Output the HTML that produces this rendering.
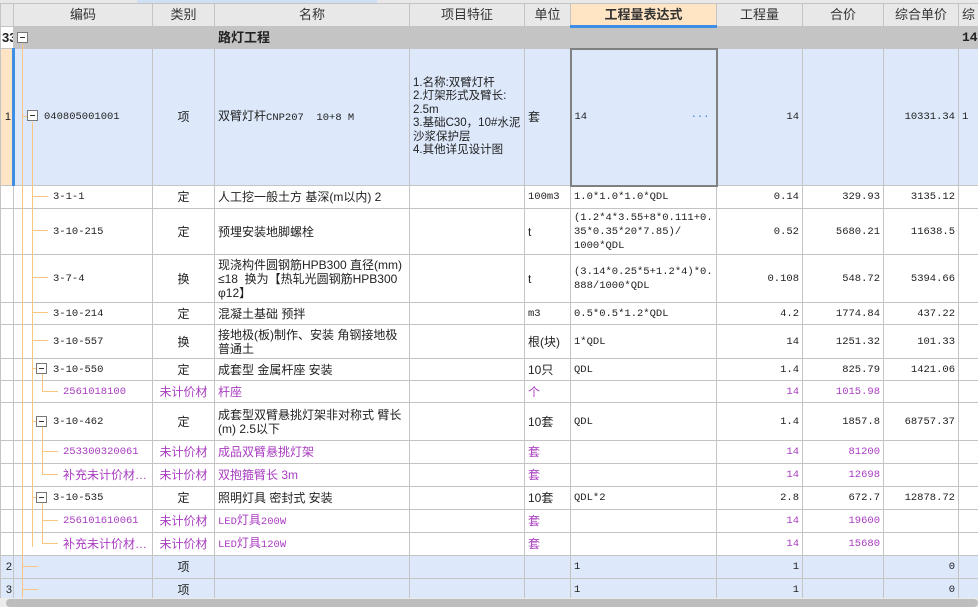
<!DOCTYPE html>
<html><head><meta charset="utf-8"><style>
*{margin:0;padding:0;box-sizing:border-box}
body{width:978px;height:607px;overflow:hidden;background:#fff;font-family:"Liberation Sans","Noto Sans CJK SC",sans-serif;font-size:12px;color:#222;position:relative}
table{position:absolute;left:0;top:3px;border-collapse:collapse;table-layout:fixed;width:978px}
td{border:1px solid #c4c4c4;padding:0 3px;overflow:hidden;white-space:nowrap;line-height:14px;vertical-align:middle}
td.w{white-space:normal;word-break:break-all}
.m{font-family:"Liberation Mono","Noto Sans CJK SC",monospace;font-size:10.5px}
tr.h td{background:#e8e8e8;text-align:center;font-size:13px;height:23px;color:#333}
tr.h td.sel{background:#ffe5c4;font-weight:bold;border-bottom:3px solid #3d8fe6}
tr.g td{background:#c4c4c4;font-weight:bold;height:22px;font-size:13px}
tr.b td{background:#dde9fb}
td.c{text-align:center}
td.r{text-align:right}
td.n{background:#fff;text-align:right;padding:0 1px;font-size:11px}
.p{color:#a93cc0}
.t{position:absolute;background:#f8c680}
.box{position:absolute;width:11px;height:11px;border:1px solid #777;background:#fff}
.box:after{content:"";position:absolute;left:2px;top:4px;width:5px;height:1px;background:#333}
</style></head><body>
<div style="position:absolute;left:0;top:0;width:978px;height:3px;background:#e8e8e8"></div>
<div style="position:absolute;left:137px;top:0;width:240px;height:3px;background:#cfe0f5"></div>
<table>
<colgroup><col style="width:13px"><col style="width:139px"><col style="width:62px"><col style="width:195px"><col style="width:115px"><col style="width:46px"><col style="width:146px"><col style="width:86px"><col style="width:81px"><col style="width:75px"><col style="width:20px"></colgroup>
<tr class="h"><td></td><td>编码</td><td>类别</td><td>名称</td><td>项目特征</td><td>单位</td><td class="sel">工程量表达式</td><td>工程量</td><td>合价</td><td>综合单价</td><td>综</td></tr>
<tr class="g"><td class="n" style="background:#fff;font-weight:bold">33</td><td></td><td></td><td>路灯工程</td><td></td><td></td><td></td><td></td><td></td><td></td><td class="m" style="font-weight:bold">14</td></tr>
<tr class="b" style="height:137px"><td class="n" style="background:#ffe5c4;border-right:3px solid #3d8fe6">1</td><td class="m" style="padding-left:29px">040805001001</td><td class="c">项</td><td>双臂灯杆<span class="m">CNP207&nbsp;&nbsp;10+8 M</span></td><td class="w" style="line-height:13.5px;font-size:11.5px">1.名称:双臂灯杆<br>2.灯架形式及臂长:<br>2.5m<br>3.基础C30，10#水泥沙浆保护层<br>4.其他详见设计图</td><td>套</td><td class="m" style="border:2px solid #808080;position:relative">14<span style="position:absolute;right:6px;color:#4a7fc0">···</span></td><td class="r m">14</td><td></td><td class="r m">10331.34</td><td class="m">1</td></tr>
<tr style="height:23px"><td class="n"></td><td class="m" style="padding-left:39px">3-1-1</td><td class="c">定</td><td>人工挖一般土方 基深(m以内) 2</td><td></td><td class="m">100m3</td><td class="m">1.0*1.0*1.0*QDL</td><td class="r m">0.14</td><td class="r m">329.93</td><td class="r m">3135.12</td><td></td></tr>
<tr style="height:46px"><td class="n"></td><td class="m" style="padding-left:39px">3-10-215</td><td class="c">定</td><td>预埋安装地脚螺栓</td><td></td><td>t</td><td class="w m">(1.2*4*3.55+8*0.111+0.35*0.35*20*7.85)/<br>1000*QDL</td><td class="r m">0.52</td><td class="r m">5680.21</td><td class="r m">11638.5</td><td></td></tr>
<tr style="height:48px"><td class="n"></td><td class="m" style="padding-left:39px">3-7-4</td><td class="c">换</td><td class="w">现浇构件圆钢筋HPB300 直径(mm) ≤18&nbsp; 换为【热轧光圆钢筋HPB300 φ12】</td><td></td><td>t</td><td class="w m">(3.14*0.25*5+1.2*4)*0.888/1000*QDL</td><td class="r m">0.108</td><td class="r m">548.72</td><td class="r m">5394.66</td><td></td></tr>
<tr style="height:22px"><td class="n"></td><td class="m" style="padding-left:39px">3-10-214</td><td class="c">定</td><td>混凝土基础 预拌</td><td></td><td class="m">m3</td><td class="m">0.5*0.5*1.2*QDL</td><td class="r m">4.2</td><td class="r m">1774.84</td><td class="r m">437.22</td><td></td></tr>
<tr style="height:34px"><td class="n"></td><td class="m" style="padding-left:39px">3-10-557</td><td class="c">换</td><td class="w">接地极(板)制作、安装 角钢接地极普通土</td><td></td><td>根(块)</td><td class="m">1*QDL</td><td class="r m">14</td><td class="r m">1251.32</td><td class="r m">101.33</td><td></td></tr>
<tr style="height:22px"><td class="n"></td><td class="m" style="padding-left:39px">3-10-550</td><td class="c">定</td><td>成套型 金属杆座 安装</td><td></td><td>10只</td><td class="m">QDL</td><td class="r m">1.4</td><td class="r m">825.79</td><td class="r m">1421.06</td><td></td></tr>
<tr style="height:22px" class="p"><td class="n"></td><td class="m" style="padding-left:49px">2561018100</td><td class="c">未计价材</td><td>杆座</td><td></td><td>个</td><td></td><td class="r m">14</td><td class="r m">1015.98</td><td></td><td></td></tr>
<tr style="height:38px"><td class="n"></td><td class="m" style="padding-left:39px">3-10-462</td><td class="c">定</td><td class="w">成套型双臂悬挑灯架非对称式 臂长(m) 2.5以下</td><td></td><td>10套</td><td class="m">QDL</td><td class="r m">1.4</td><td class="r m">1857.8</td><td class="r m">68757.37</td><td></td></tr>
<tr style="height:23px" class="p"><td class="n"></td><td class="m" style="padding-left:49px">253300320061</td><td class="c">未计价材</td><td>成品双臂悬挑灯架</td><td></td><td>套</td><td></td><td class="r m">14</td><td class="r m">81200</td><td></td><td></td></tr>
<tr style="height:23px" class="p"><td class="n"></td><td style="padding-left:49px">补充未计价材…</td><td class="c">未计价材</td><td>双抱箍臂长 3m</td><td></td><td>套</td><td></td><td class="r m">14</td><td class="r m">12698</td><td></td><td></td></tr>
<tr style="height:23px"><td class="n"></td><td class="m" style="padding-left:39px">3-10-535</td><td class="c">定</td><td>照明灯具 密封式 安装</td><td></td><td>10套</td><td class="m">QDL*2</td><td class="r m">2.8</td><td class="r m">672.7</td><td class="r m">12878.72</td><td></td></tr>
<tr style="height:23px" class="p"><td class="n"></td><td class="m" style="padding-left:49px">256101610061</td><td class="c">未计价材</td><td><span class="m">LED</span>灯具<span class="m">200W</span></td><td></td><td>套</td><td></td><td class="r m">14</td><td class="r m">19600</td><td></td><td></td></tr>
<tr style="height:23px" class="p"><td class="n"></td><td style="padding-left:49px">补充未计价材…</td><td class="c">未计价材</td><td><span class="m">LED</span>灯具<span class="m">120W</span></td><td></td><td>套</td><td></td><td class="r m">14</td><td class="r m">15680</td><td></td><td></td></tr>
<tr class="b" style="height:23px"><td class="n">2</td><td></td><td class="c">项</td><td></td><td></td><td></td><td class="m">1</td><td class="r m">1</td><td></td><td class="r m">0</td><td></td></tr>
<tr class="b" style="height:23px"><td class="n">3</td><td></td><td class="c">项</td><td></td><td></td><td></td><td class="m">1</td><td class="r m">1</td><td></td><td class="r m">0</td><td></td></tr>
</table>
<div class="t" style="left:22px;top:44px;width:1px;height:554px"></div>
<div class="t" style="left:32px;top:122px;width:1px;height:425px"></div>
<div class="t" style="left:22px;top:116px;width:5px;height:1px"></div>
<div class="t" style="left:32px;top:196px;width:16px;height:1px"></div>
<div class="t" style="left:32px;top:230px;width:16px;height:1px"></div>
<div class="t" style="left:32px;top:277px;width:16px;height:1px"></div>
<div class="t" style="left:32px;top:312px;width:16px;height:1px"></div>
<div class="t" style="left:32px;top:340px;width:16px;height:1px"></div>
<div class="t" style="left:32px;top:368px;width:4px;height:1px"></div>
<div class="t" style="left:42px;top:374px;width:1px;height:17px"></div>
<div class="t" style="left:42px;top:391px;width:16px;height:1px"></div>
<div class="t" style="left:32px;top:421px;width:4px;height:1px"></div>
<div class="t" style="left:42px;top:427px;width:1px;height:47px"></div>
<div class="t" style="left:42px;top:451px;width:16px;height:1px"></div>
<div class="t" style="left:42px;top:474px;width:16px;height:1px"></div>
<div class="t" style="left:32px;top:497px;width:4px;height:1px"></div>
<div class="t" style="left:42px;top:503px;width:1px;height:41px"></div>
<div class="t" style="left:42px;top:520px;width:16px;height:1px"></div>
<div class="t" style="left:42px;top:543px;width:16px;height:1px"></div>
<div class="t" style="left:22px;top:566px;width:16px;height:1px"></div>
<div class="t" style="left:22px;top:589px;width:16px;height:1px"></div>
<div class="box" style="left:17px;top:32px"></div>
<div class="box" style="left:27px;top:110px"></div>
<div class="box" style="left:36px;top:363px"></div>
<div class="box" style="left:36px;top:416px"></div>
<div class="box" style="left:36px;top:492px"></div>
<div style="position:absolute;left:0;top:598px;width:978px;height:9px;background:#ececec"></div>
<div style="position:absolute;left:6px;top:599px;width:972px;height:8px;background:#bdbdbd;border-radius:4px"></div>
</body></html>
